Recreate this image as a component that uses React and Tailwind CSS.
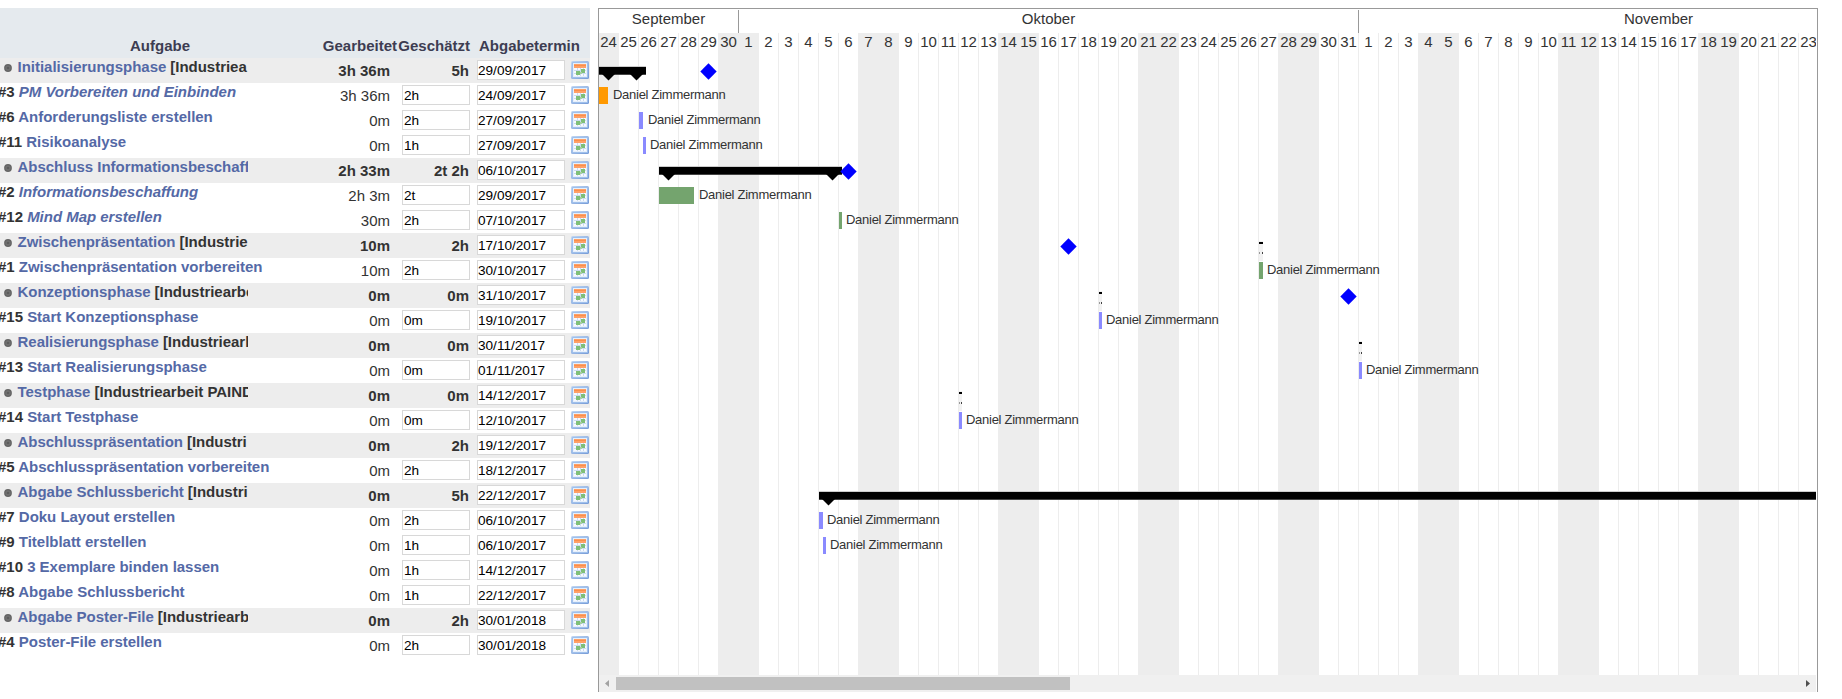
const DAY = 20;
const MONTHS = [
  { name: "September", width: 140 },
  { name: "Oktober", width: 620 },
  { name: "November", width: 600 },
];
const DAYS = [];
for (let i = 0; i < 61; i++) {
  const label = i < 7 ? 24 + i : i < 38 ? i - 6 : i - 37;
  DAYS.push({ label, weekend: i % 7 === 0 || i % 7 === 6 });
}

const PERSON = "Daniel Zimmermann";

// name, project suffix, worked, estimated, due date, chart items (pixels from the chart's left edge)
const ROWS = [
  { phase: true, name: "Initialisierungsphase", project: "[Industriea", worked: "3h 36m", est: "5h", due: "29/09/2017", summary: { x: 0, w: 47, tips: [3, 31] }, diamond: 109 },
  { no: "#3", italic: true, name: "PM Vorbereiten und Einbinden", worked: "3h 36m", est: "2h", due: "24/09/2017", bar: { x: 0, w: 9, c: "bg-[#ff9900]" }, text: 14 },
  { no: "#6", name: "Anforderungsliste erstellen", worked: "0m", est: "2h", due: "27/09/2017", bar: { x: 40, w: 4, c: "bg-[#8a8aff]" }, text: 49 },
  { no: "#11", name: "Risikoanalyse", worked: "0m", est: "1h", due: "27/09/2017", bar: { x: 44, w: 3, c: "bg-[#8a8aff]" }, text: 51 },
  { phase: true, name: "Abschluss Informationsbeschaffung", worked: "2h 33m", est: "2t 2h", due: "06/10/2017", summary: { x: 60, w: 183, tips: [63, 227] }, diamond: 249 },
  { no: "#2", italic: true, name: "Informationsbeschaffung", worked: "2h 3m", est: "2t", due: "29/09/2017", bar: { x: 60, w: 35, c: "bg-[#74a46e]" }, text: 100 },
  { no: "#12", italic: true, name: "Mind Map erstellen", worked: "30m", est: "2h", due: "07/10/2017", bar: { x: 240, w: 3, c: "bg-[#74a46e]" }, text: 247 },
  { phase: true, name: "Zwischenpräsentation", project: "[Industrie", worked: "10m", est: "2h", due: "17/10/2017", diamond: 469, mini: { x: 660, w: 4 } },
  { no: "#1", name: "Zwischenpräsentation vorbereiten", worked: "10m", est: "2h", due: "30/10/2017", bar: { x: 660, w: 4, c: "bg-[#74a46e]" }, text: 668 },
  { phase: true, name: "Konzeptionsphase", project: "[Industriearbeit", worked: "0m", est: "0m", due: "31/10/2017", diamond: 749, mini: { x: 500, w: 3 } },
  { no: "#15", name: "Start Konzeptionsphase", worked: "0m", est: "0m", due: "19/10/2017", bar: { x: 500, w: 3, c: "bg-[#8a8aff]" }, text: 507 },
  { phase: true, name: "Realisierungsphase", project: "[Industriearbeit", worked: "0m", est: "0m", due: "30/11/2017", mini: { x: 760, w: 3 } },
  { no: "#13", name: "Start Realisierungsphase", worked: "0m", est: "0m", due: "01/11/2017", bar: { x: 760, w: 3, c: "bg-[#8a8aff]" }, text: 767 },
  { phase: true, name: "Testphase", project: "[Industriearbeit PAIND]", worked: "0m", est: "0m", due: "14/12/2017", mini: { x: 360, w: 3 } },
  { no: "#14", name: "Start Testphase", worked: "0m", est: "0m", due: "12/10/2017", bar: { x: 360, w: 3, c: "bg-[#8a8aff]" }, text: 367 },
  { phase: true, name: "Abschlusspräsentation", project: "[Industri", worked: "0m", est: "2h", due: "19/12/2017" },
  { no: "#5", name: "Abschlusspräsentation vorbereiten", worked: "0m", est: "2h", due: "18/12/2017" },
  { phase: true, name: "Abgabe Schlussbericht", project: "[Industri", worked: "0m", est: "5h", due: "22/12/2017", summary: { x: 220, w: 997, tips: [223] } },
  { no: "#7", name: "Doku Layout erstellen", worked: "0m", est: "2h", due: "06/10/2017", bar: { x: 220, w: 4, c: "bg-[#8a8aff]" }, text: 228 },
  { no: "#9", name: "Titelblatt erstellen", worked: "0m", est: "1h", due: "06/10/2017", bar: { x: 224, w: 3, c: "bg-[#8a8aff]" }, text: 231 },
  { no: "#10", name: "3 Exemplare binden lassen", worked: "0m", est: "1h", due: "14/12/2017" },
  { no: "#8", name: "Abgabe Schlussbericht", worked: "0m", est: "1h", due: "22/12/2017" },
  { phase: true, name: "Abgabe Poster-File", project: "[Industriearbeit", worked: "0m", est: "2h", due: "30/01/2018" },
  { no: "#4", name: "Poster-File erstellen", worked: "0m", est: "2h", due: "30/01/2018" },
];

function CalendarIcon() {
  return (
    <svg width="18" height="18" viewBox="0 0 18 18" className="block">
      <defs>
        <linearGradient id="frame" x1="0" y1="0" x2="1" y2="1">
          <stop offset="0" stopColor="#c3d8f3" />
          <stop offset="1" stopColor="#7399d6" />
        </linearGradient>
      </defs>
      <rect width="18" height="18" rx="1.5" fill="url(#frame)" />
      <rect x="1" y="1" width="16" height="16" rx="1" fill="#9fc0ec" />
      <rect x="2" y="2" width="14" height="14" fill="#e6effb" />
      <rect x="3" y="3" width="12" height="4" fill="#ffa066" />
      <rect x="3" y="4" width="12" height="1" fill="#f98f4c" />
      <rect x="3" y="7" width="12" height="8" fill="#f7fafe" />
      <path d="M3 9.5H15M3 12.5H15M6.5 7V15M9.5 7V15M12.5 7V15" stroke="#cbdaf0" fill="none" />
      <rect x="10" y="8" width="4" height="4" fill="#7fbf78" />
      <rect x="5" y="10" width="4" height="4" fill="#7fbf78" />
      <rect x="9" y="11" width="2" height="2" fill="#a6d19f" />
    </svg>
  );
}

function Bullet() {
  return (
    <svg width="8" height="8" viewBox="0 0 8 8" className="block">
      <circle cx="4" cy="4" r="3.9" fill="#666666" />
      <circle cx="4" cy="4" r="2" fill="none" stroke="#787878" strokeWidth="0.8" />
      <circle cx="4" cy="4" r="1.1" fill="#5c5c5c" />
    </svg>
  );
}

function TaskRow({ row }) {
  return (
    <div className={"flex h-[25px] " + (row.phase ? "bg-[#ededed]" : "")}>
      <div className="w-[312px] shrink-0 text-[15px] leading-[17px] font-bold tracking-[-0.02px] whitespace-nowrap">
        {row.phase ? (
          <div className="flex h-[22px] w-[248px] overflow-hidden pl-1">
            <span className="mt-[6px] mr-[5.5px]"><Bullet /></span>
            <span className="text-[#5469a6]">{row.name}</span>
            {row.project && <span className="ml-1">{row.project}</span>}
          </div>
        ) : (
          <div className="-ml-[2px]">
            <span>{row.no}</span>{" "}
            <span className={"text-[#5469a6] " + (row.italic ? "italic" : "")}>{row.name}</span>
          </div>
        )}
      </div>
      <div className={"w-[78px] shrink-0 pt-px text-right text-[15px] leading-[23px] " + (row.phase ? "font-bold" : "")}>{row.worked}</div>
      {row.phase ? (
        <div className="w-[79px] shrink-0 pt-px text-right text-[15px] leading-[23px] font-bold">{row.est}</div>
      ) : (
        <div className="mt-[2px] ml-3 h-5 w-[68px] shrink-0 border border-[#d8d8d8] bg-white pl-px text-[13.6px] leading-[20px] text-black">{row.est}</div>
      )}
      <div className={"mt-[2px] h-5 w-[88px] shrink-0 border border-[#d8d8d8] bg-white text-[13.6px] leading-[20px] text-black " + (row.phase ? "ml-2" : "ml-[7px]")}>{row.due}</div>
      <div className="mt-[3px] ml-1.5"><CalendarIcon /></div>
    </div>
  );
}

function ChartRow({ row }) {
  return (
    <div className="relative h-[25px]">
      {row.summary && (
        <>
          <div className="absolute top-2 h-[9px] border-t border-b border-t-[#cccccc] border-b-[#444] bg-black" style={{ left: row.summary.x, width: row.summary.w }} />
          {row.summary.tips.map((t) => (
            <svg key={t} className="absolute top-4" style={{ left: t }} width="13" height="7" viewBox="0 0 13 7">
              <path d="M0 0H13L6.5 6.5Z" fill="#000" />
            </svg>
          ))}
        </>
      )}
      {row.diamond && (
        <svg className="absolute top-[5px]" style={{ left: row.diamond - 8 }} width="17" height="17" viewBox="0 0 17 17">
          <path d="M8.5 0.3L16.7 8.5L8.5 16.7L0.3 8.5Z" fill="#0000ff" />
        </svg>
      )}
      {row.mini && (
        <div className="absolute top-[8px] h-5 bg-[#f2f2f2]" style={{ left: row.mini.x, width: row.mini.w }}>
          <div className="mt-px h-0.5 bg-black" />
          <div className="mt-2 flex h-0.5 justify-between">
            <div className="w-px bg-[#999]" />
            <div className="w-px bg-[#444]" />
          </div>
        </div>
      )}
      {row.bar && <div className={"absolute top-1 h-[17px] " + row.bar.c} style={{ left: row.bar.x, width: row.bar.w }} />}
      {row.text && (
        <div className="absolute top-[3px] text-[13px] leading-[18px] tracking-[-0.27px] whitespace-nowrap" style={{ left: row.text }}>{PERSON}</div>
      )}
    </div>
  );
}

export default function App() {
  return (
    <div className="flex h-[699px] w-[1842px] overflow-hidden bg-white pt-2 font-['Liberation_Sans',Arial,sans-serif] text-[#333]">
      <div className="w-[590px] shrink-0">
        <div className="flex h-[50px] items-end bg-[#e5eaee] pb-px text-[15px] leading-[22px] font-bold text-[#3d3d52]">
          <div className="w-[320px] text-center">Aufgabe</div>
          <div className="w-[77px] text-right">Gearbeitet</div>
          <div className="w-[73px] text-right">Geschätzt</div>
          <div className="ml-[9px]">Abgabetermin</div>
        </div>
        {ROWS.map((row, i) => <TaskRow key={i} row={row} />)}
      </div>

      <div className="ml-2 h-[684px] w-[1220px] shrink-0 border-x border-t border-[#999]">
        <div className="relative h-[666px] w-[1217px] overflow-hidden">
          <div className="flex h-6 w-[1360px] pt-px text-[15px]">
            {MONTHS.map((m) => (
              <div key={m.name} className="h-[23px] shrink-0 border-r border-[#999] text-center leading-[18px]" style={{ width: m.width }}>{m.name}</div>
            ))}
          </div>
          <div className="flex h-[642px] w-[1220px]">
            {DAYS.map((d, i) => (
              <div
                key={i}
                className={"shrink-0 border-r border-[#ededed] text-center text-[15px] leading-[18px] " + (d.weekend ? "bg-[#ededed]" : "")}
                style={{ width: DAY }}
              >
                {d.label}
              </div>
            ))}
          </div>
          <div className="absolute inset-x-0 top-[49px]">
            {ROWS.map((row, i) => <ChartRow key={i} row={row} />)}
          </div>
        </div>
        <div className="flex h-[17px] w-[1217px] items-center bg-[#f0f0f0]">
          <svg width="17" height="17" viewBox="0 0 17 17"><path d="M10 5V12L6 8.5Z" fill="#a3a3a3" /></svg>
          <div className="h-[13px] w-[454px] bg-[#c1c1c1]" />
          <div className="grow" />
          <svg width="17" height="17" viewBox="0 0 17 17"><path d="M7 5V12L11 8.5Z" fill="#505050" /></svg>
        </div>
      </div>
    </div>
  );
}
